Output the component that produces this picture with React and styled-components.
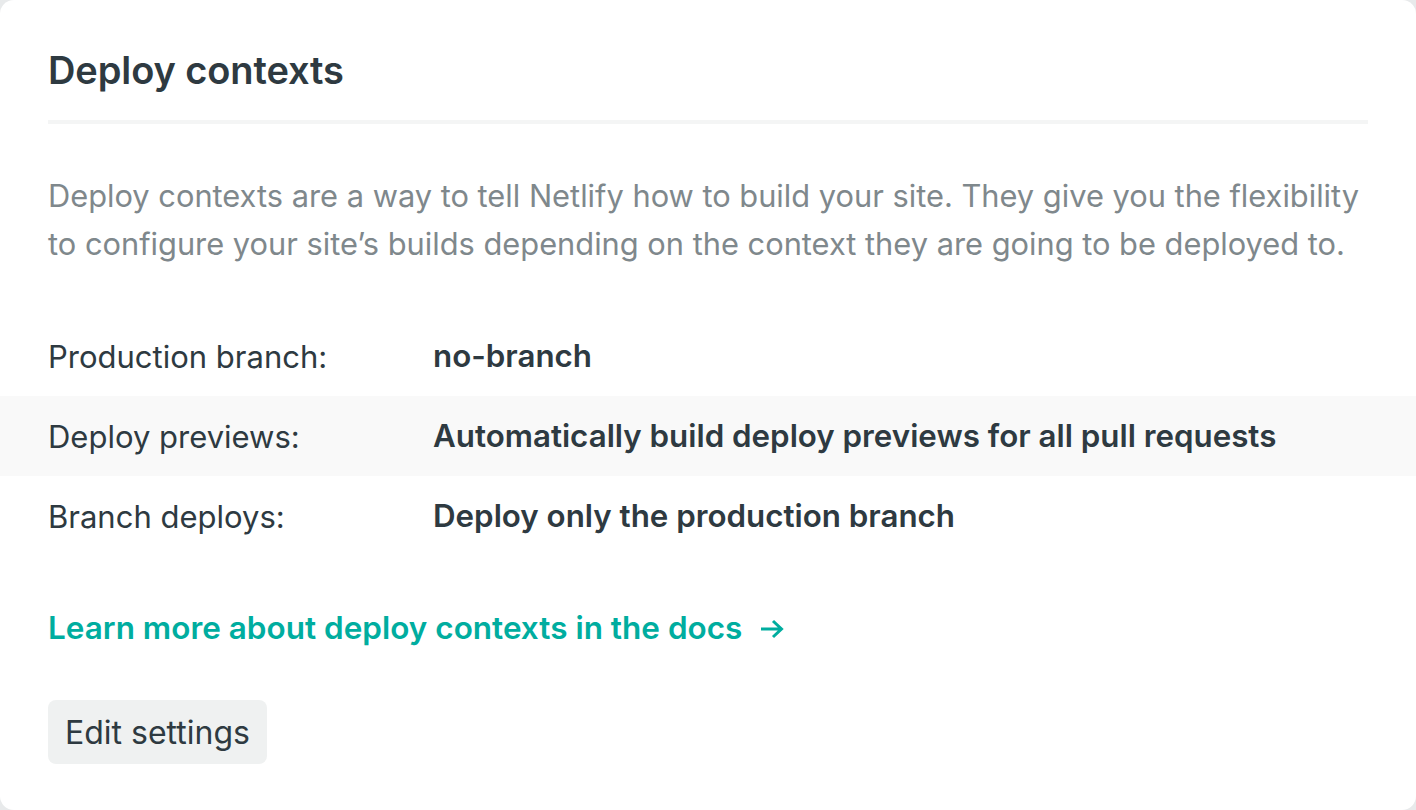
import React from 'react'
import styled, { createGlobalStyle } from 'styled-components'

const GlobalStyle = createGlobalStyle`
  html, body {
    margin: 0;
    padding: 0;
    background: #e8eaeb;
  }
  body {
    font-family: Inter, "Noto Sans", "Liberation Sans", sans-serif;
    -webkit-font-smoothing: antialiased;
  }
`

const Card = styled.section`
  box-sizing: border-box;
  width: 1416px;
  height: 810px;
  background: #ffffff;
  border-radius: 14px;
  overflow: hidden;
  padding: 42px 0 0;
  color: #2e3a41;
`

const Inset = styled.div`
  padding: 0 48px;
`

const Title = styled.h2`
  margin: 0;
  font-size: 38px;
  line-height: 56px;
  font-weight: 600;
  letter-spacing: -0.1px;
  padding-bottom: 22px;
  border-bottom: 4px solid #f4f5f5;
`

const Description = styled.p`
  margin: 0;
  padding-top: 48px;
  font-size: 30.8px;
  line-height: 48px;
  color: #7f888c;
`

const Settings = styled.dl`
  margin: 48px 0 0;
  padding: 0;
`

const Row = styled.div`
  display: grid;
  grid-template-columns: 385px 1fr;
  align-items: center;
  height: 80px;
  padding: 0 48px;
  background: ${p => (p.$shaded ? '#f9f9f9' : 'transparent')};
`

const Label = styled.dt`
  margin: 0;
  font-size: 31px;
  font-weight: 400;
`

const Value = styled.dd`
  margin: 0;
  font-size: 31.3px;
  font-weight: 600;
`

const DocsLink = styled.a`
  display: inline-flex;
  align-items: center;
  gap: 18px;
  margin-top: 50px;
  font-size: 31.5px;
  line-height: 44px;
  font-weight: 600;
  color: #00ad9f;
  text-decoration: none;
`

const Arrow = styled.svg`
  width: 24px;
  height: 20px;
  margin-top: 2px;
`

const Actions = styled.div`
  padding-top: 50px;
`

const Button = styled.button`
  height: 64px;
  padding: 0 17px;
  border: none;
  border-radius: 8px;
  background: #eff1f1;
  color: #2e3a41;
  font-family: inherit;
  font-size: 32px;
  font-weight: 400;
  cursor: pointer;
`

const rows = [
  { label: 'Production branch:', value: 'no-branch' },
  { label: 'Deploy previews:', value: 'Automatically build deploy previews for all pull requests', shaded: true },
  { label: 'Branch deploys:', value: 'Deploy only the production branch' },
]

export default function App() {
  return (
    <>
      <GlobalStyle />
      <Card>
        <Inset>
          <Title>Deploy contexts</Title>
          <Description>
            Deploy contexts are a way to tell Netlify how to build your site. They give you the flexibility
            to configure your site’s builds depending on the context they are going to be deployed to.
          </Description>
        </Inset>
        <Settings>
          {rows.map(r => (
            <Row key={r.label} $shaded={r.shaded}>
              <Label>{r.label}</Label>
              <Value>{r.value}</Value>
            </Row>
          ))}
        </Settings>
        <Inset>
          <DocsLink href="#">
            Learn more about deploy contexts in the docs
            <Arrow viewBox="0 0 24 20" fill="none" stroke="currentColor" strokeWidth="3" strokeLinejoin="miter">
              <path d="M1 10h20M13 2l8.5 8-8.5 8" />
            </Arrow>
          </DocsLink>
          <Actions>
            <Button>Edit settings</Button>
          </Actions>
        </Inset>
      </Card>
    </>
  )
}
